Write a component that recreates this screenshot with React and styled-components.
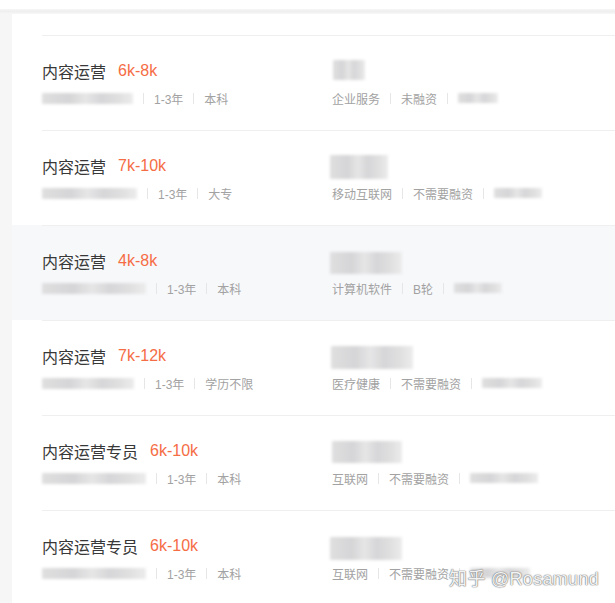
import React from "react";
import styled, { createGlobalStyle } from "styled-components";

const GlobalStyle = createGlobalStyle`
    html, body {
        margin: 0;
        padding: 0;
        background: #fff;
        font-family: "Liberation Sans", "Noto Sans CJK SC", sans-serif;
        overflow: hidden;
    }`;

const Page = styled.div`
        position: relative;
        display: flex;
        flex-direction: column;
        width: 615px;
        height: 603px;
        overflow: hidden;`,
    TopBar = styled.div`
        height: 14px;
        padding-top: 9px;
        box-sizing: border-box;
        display: flex;
        flex-direction: column;`,
    TopRule = styled.div`
        height: 5px;
        background: linear-gradient(#f6f6f6, #efefef 50%, #f7f7f7);`,
    Body = styled.div`
        display: flex;
        flex: 1;`,
    SideStrip = styled.div`
        width: 12px;
        flex-shrink: 0;
        background: #f6f6f7;`,
    JobList = styled.ul`
        flex: 1;
        list-style: none;
        margin: 0;
        padding: 21px 0 0;
        background: #fff;`,
    JobItem = styled.li`
        padding-left: 30px;
        background: ${p => p.$active ? "#f7f8fa" : "#fff"};`,
    JobInner = styled.div`
        display: flex;
        height: 95px;
        box-sizing: border-box;
        border-top: 1px solid #efefef;
        padding-top: 24px;`,
    Primary = styled.div`
        width: 290px;
        flex-shrink: 0;
        display: flex;
        flex-direction: column;
        gap: 6px;`,
    Company = styled.div`
        flex: 1;
        display: flex;
        flex-direction: column;
        gap: 6px;`,
    TitleRow = styled.div`
        display: flex;
        align-items: center;
        gap: 12px;
        height: 22px;
        font-size: 16px;`,
    JobName = styled.span`
        color: #383838;`,
    Salary = styled.span`
        color: #f56d45;
        font-family: "Liberation Sans", sans-serif;`,
    InfoRow = styled.div`
        display: flex;
        align-items: center;
        height: 20px;
        font-size: 12px;
        color: #a2a2a2;`,
    Divider = styled.span`
        display: inline-block;
        width: 1px;
        height: 11px;
        margin: 0 10px;
        background: #e6e6e6;`,
    NameSlot = styled.div`
        height: 22px;
        display: flex;
        align-items: flex-start;`,
    Blur = styled.span`
        display: inline-block;
        width: ${p => p.$w}px;
        height: ${p => p.$h || 11}px;
        margin-left: ${p => p.$x || 0}px;
        margin-top: ${p => p.$y || 0}px;
        background: linear-gradient(90deg, #dfdfe0, #d5d5d7 30%, #e6e6e7 48%, #d6d6d8 65%, #e0e0e1 85%, #ececec);
        filter: blur(1.4px);
        border-radius: 1px;`,
    Watermark = styled.div`
        position: absolute;
        right: 16px;
        bottom: 13px;
        font-size: 18px;
        letter-spacing: 0.3px;
        color: rgba(255, 255, 255, 0.92);
        text-shadow: 0 0 1px #777, 0 0 1px #777, 0 0 2px rgba(0,0,0,0.25);`;

const jobs = [
    { name: "内容运营", salary: "6k-8k", loc: 91, edu: "本科", corp: [32, 20, 1, 0], tags: ["企业服务", "未融资"], tail: 40 },
    { name: "内容运营", salary: "7k-10k", loc: 95, edu: "大专", corp: [58, 24, -2, 0], tags: ["移动互联网", "不需要融资"], tail: 48 },
    { name: "内容运营", salary: "4k-8k", loc: 104, edu: "本科", corp: [72, 22, -2, 2], tags: ["计算机软件", "B轮"], tail: 48, active: true },
    { name: "内容运营", salary: "7k-12k", loc: 92, edu: "学历不限", corp: [82, 23, -1, 1], tags: ["医疗健康", "不需要融资"], tail: 60 },
    { name: "内容运营专员", salary: "6k-10k", loc: 104, edu: "本科", corp: [70, 22, 0, 1], tags: ["互联网", "不需要融资"], tail: 68 },
    { name: "内容运营专员", salary: "6k-10k", loc: 104, edu: "本科", corp: [72, 23, -2, 2], tags: ["互联网", "不需要融资"], tail: 60 },
];

function Job({ job }) {
    const [cw, ch, cx, cy] = job.corp;
    return <JobItem $active={job.active}>
        <JobInner>
            <Primary>
                <TitleRow>
                    <JobName>{job.name}</JobName>
                    <Salary>{job.salary}</Salary>
                </TitleRow>
                <InfoRow>
                    <Blur $w={job.loc}/>
                    <Divider/>
                    <span>1-3年</span>
                    <Divider/>
                    <span>{job.edu}</span>
                </InfoRow>
            </Primary>
            <Company>
                <NameSlot>
                    <Blur $w={cw} $h={ch} $x={cx} $y={cy}/>
                </NameSlot>
                <InfoRow>
                    <span>{job.tags[0]}</span>
                    <Divider/>
                    <span>{job.tags[1]}</span>
                    <Divider/>
                    <Blur $w={job.tail} $h={10}/>
                </InfoRow>
            </Company>
        </JobInner>
    </JobItem>;
}

export default function App() {
    return <Page>
        <GlobalStyle/>
        <TopBar>
            <TopRule/>
        </TopBar>
        <Body>
            <SideStrip/>
            <JobList>
                {jobs.map((job, i) => <Job key={i} job={job}/>)}
            </JobList>
        </Body>
        <Watermark>知乎 @Rosamund</Watermark>
    </Page>;
}
